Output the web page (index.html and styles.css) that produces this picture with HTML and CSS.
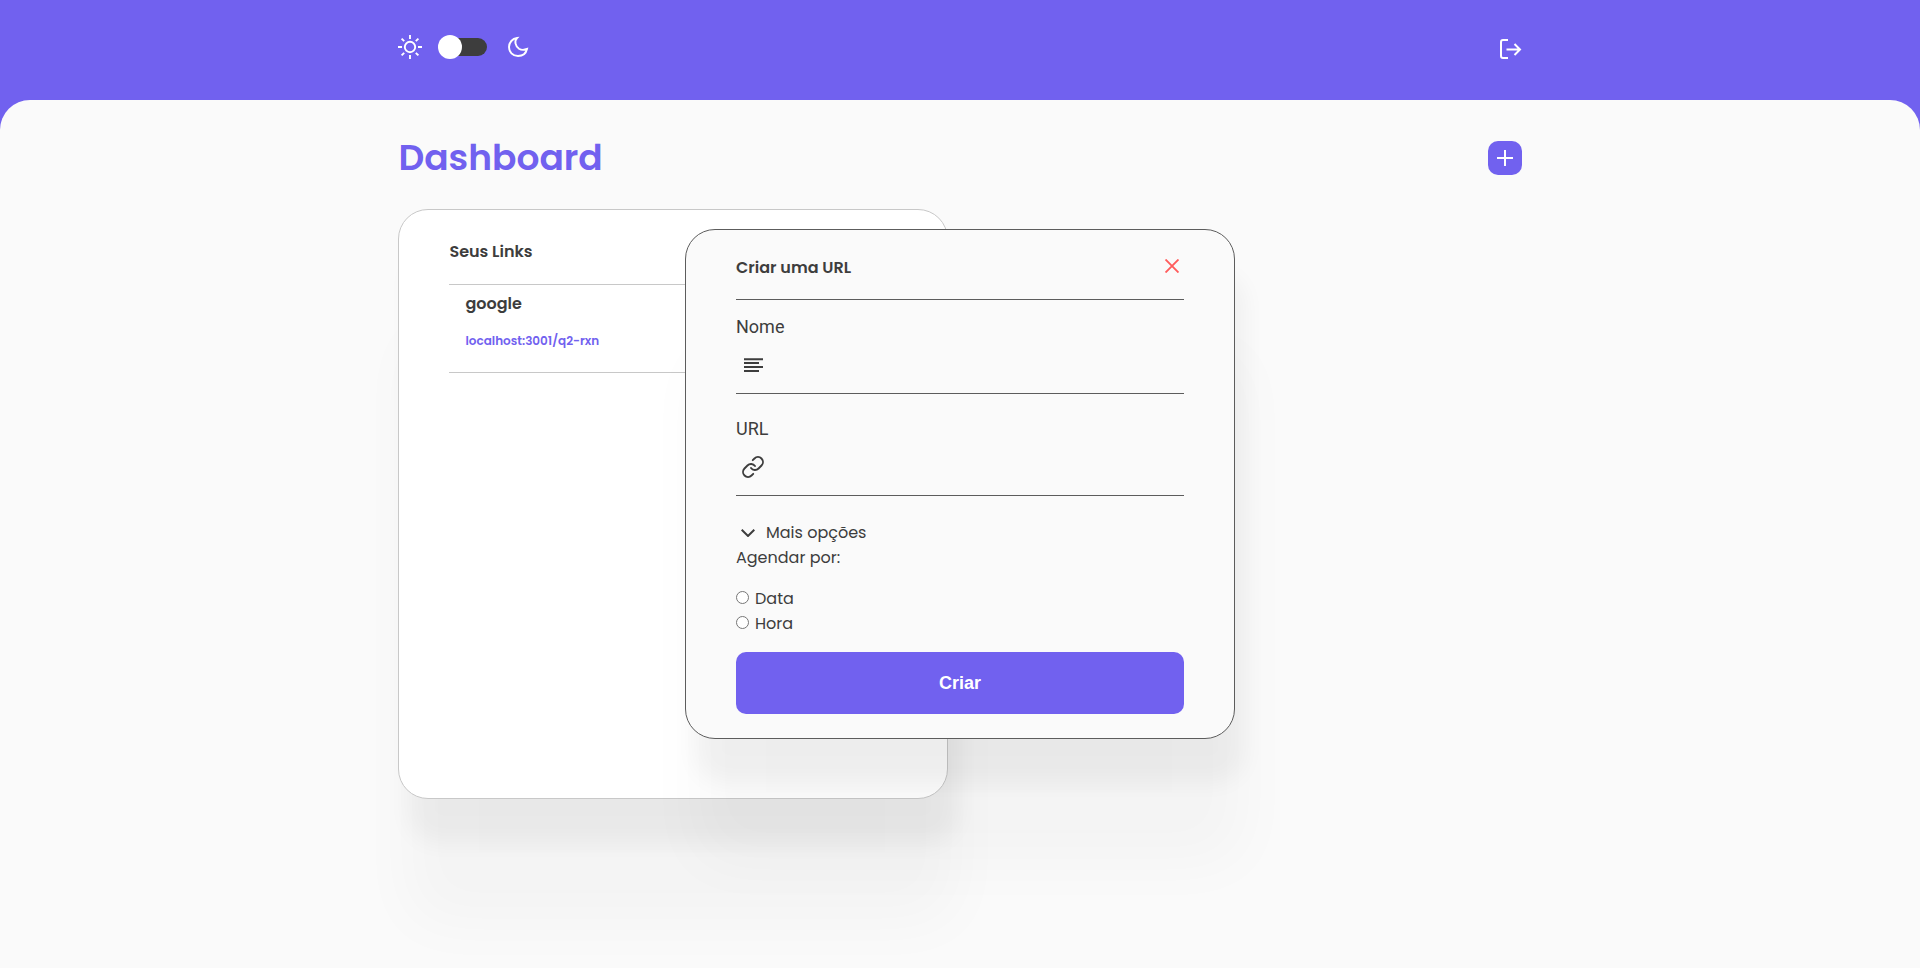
FILE: index.html
```
<!DOCTYPE html>
<html lang="pt-BR">
<head>
<meta charset="utf-8">
<title>Dashboard</title>
<link rel="stylesheet" href="styles.css">
</head>
<body>
<header class="topbar">
  <div class="container topbar-row">
    <div class="theme">
      <svg class="icon sun" viewBox="0 0 24 24"><circle cx="12" cy="12" r="5.2"/><path d="M12 0v4M12 20v4M0 12h4M20 12h4M3.6 3.6l2.6 2.6M17.8 17.8l2.6 2.6M3.6 20.4l2.6-2.6M17.8 6.2l2.6-2.6"/></svg>
      <span class="switch"><span class="knob"></span></span>
      <svg class="icon moon" viewBox="0 0 24 24"><path d="M11 3C8 6 9.500 11.500 13 13.800C15.500 15.300 18.500 15 21 14C20 18.500 16.500 21 12 21C6.500 21 3 17 3 12C3 7.500 6.500 3.500 11 3Z"/></svg>
    </div>
    <svg class="icon logout" viewBox="0 0 24 24"><path d="M10 3H5a2 2 0 0 0-2 2v14a2 2 0 0 0 2 2h5M8.500 12.500H22M16.500 7l5.500 5.500L16.500 18"/></svg>
  </div>
</header>
<main class="page">
  <div class="container">
    <div class="heading">
      <h1 class="title">Dashboard</h1>
      <button class="add"><svg class="icon" viewBox="0 0 16 16"><path d="M8 0v16M0 8h16"/></svg></button>
    </div>
    <section class="card">
      <h2 class="card-title">Seus Links</h2>
      <div class="link-item">
        <h3 class="link-name">google</h3>
        <a class="link-url">localhost:3001/q2-rxn</a>
      </div>
    </section>
  </div>
</main>
<section class="modal">
  <div class="modal-head">
    <h2 class="modal-title">Criar uma URL</h2>
    <svg class="close" viewBox="0 0 14 14"><path d="M.5.5l13 13M13.500.5l-13 13"/></svg>
  </div>
  <div class="field">
    <label class="label">Nome</label>
    <svg class="field-icon" viewBox="0 0 24 24"><path d="M2 6.200h19M2 10.100h15M2 14h19M2 17.900h15"/></svg>
  </div>
  <div class="field field-next">
    <label class="label">URL</label>
    <svg class="field-icon link-icon" viewBox="0 0 24 24"><path d="M10 13a5 5 0 0 0 7.540.54l3-3a5 5 0 0 0-7.070-7.070l-1.720 1.710"/><path d="M14 11a5 5 0 0 0-7.540-.54l-3 3a5 5 0 0 0 7.070 7.070l1.710-1.710"/></svg>
  </div>
  <div class="more"><svg class="chevron" viewBox="0 0 14 8"><path d="M.7.7L7 7L13.300.7"/></svg><span>Mais opções</span></div>
  <p class="schedule">Agendar por:</p>
  <label class="choice"><input class="radio" type="radio" name="when"><span>Data</span></label>
  <label class="choice"><input class="radio" type="radio" name="when"><span>Hora</span></label>
  <button class="submit">Criar</button>
</section>
</body>
</html>
```
FILE: styles.css
```
* { box-sizing: border-box; margin: 0; padding: 0; }
body {
  height: 968px;
  overflow: hidden;
  background: #7161ef;
  color: #3d3d3d;
  font: 400 16px/25px Poppins, Inter, sans-serif;
}
.container { width: 1124px; margin: 0 auto; }
svg { display: block; fill: none; stroke: currentColor; flex: none; }
.topbar { height: 100px; color: #fff; padding-top: 35px; }
.topbar-row { display: flex; justify-content: space-between; }
.theme { display: flex; align-items: center; height: 24px; }
.sun { width: 24px; height: 24px; stroke-width: 1.9; }
.switch { width: 48px; height: 18px; margin-left: 17px; border-radius: 9px; background: #3d3d3d; display: flex; align-items: center; }
.knob { width: 24px; height: 24px; border-radius: 50%; background: #fff; margin-left: -1px; flex: none; }
.moon { width: 24px; height: 24px; margin-left: 19px; stroke-width: 1.9; }
.logout { width: 24px; height: 24px; margin: 2px .5px 0 0; stroke-width: 2; }
.page { height: 868px; background: #fafafa; border-radius: 30px 30px 0 0; }
.heading { height: 109px; padding-top: 33px; display: flex; justify-content: space-between; }
.title { height: 50px; padding-left: .4px; color: #7161ef; font-size: 36px; line-height: 50px; font-weight: 600; }
.add { width: 34px; height: 34px; margin-top: 8px; border: 0; border-radius: 10px; background: #7161ef; color: #fff; display: flex; align-items: center; justify-content: center; }
.add .icon { width: 16px; height: 16px; stroke-width: 2; }
.card, .modal {
  width: 550px;
  border-radius: 30px;
  padding: 0 50px;
  box-shadow: 10px 44px 22px rgba(0, 0, 0, .045), 9px 125px 60px rgba(0, 0, 0, .028);
}
.card { height: 590px; background: #fff; border: 1px solid #c8c8c8; }
.card-title { height: 75px; padding: 30px 0 0 .4px; font-size: 16px; line-height: 24px; font-weight: 600; border-bottom: 1px solid #c8c8c8; }
.link-item { height: 88px; padding: 7px 16.500px 0; border-bottom: 1px solid #c8c8c8; }
.link-name { font-size: 16px; line-height: 24px; font-weight: 600; }
.link-url { display: block; margin-top: 16px; font-size: 12px; line-height: 18px; font-weight: 600; color: #7161ef; }
.modal { position: absolute; left: 685px; top: 229px; height: 510px; background: #fafafa; border: 1px solid #5c5c5c; }
.modal-head { height: 70px; padding: 26px 5px 0 0; display: flex; justify-content: space-between; border-bottom: 1px solid #5c5c5c; }
.modal-title { font-size: 16px; line-height: 24px; font-weight: 600; }
.close { width: 14px; height: 14px; margin-top: 3px; color: #ff5c5c; stroke-width: 1.9; }
.field { height: 94px; padding-top: 15px; border-bottom: 1px solid #5c5c5c; }
.field-next { margin-top: 8px; }
.label { display: block; font: 400 18px/24px Roboto, sans-serif; }
.field-icon { width: 24px; height: 24px; margin: 14px 0 0 6px; stroke-width: 2; }
.link-icon { margin-left: 5px; stroke-width: 1.9; stroke-linecap: round; }
.more { display: flex; align-items: center; height: 25px; margin-top: 24px; padding-left: 5px; }
.chevron { width: 14px; height: 8px; margin-right: 11px; stroke-width: 2; }
.schedule { height: 25px; margin-bottom: 16px; }
.choice { display: flex; height: 25px; align-items: center; }
.radio { width: 13px; height: 13px; margin: 0 6px 3px 0; }
.submit { display: block; width: 100%; height: 62px; margin-top: 16px; border: 0; border-radius: 10px; background: #7161ef; color: #fff; font: 700 18px/24px "Liberation Sans", sans-serif; }
```
